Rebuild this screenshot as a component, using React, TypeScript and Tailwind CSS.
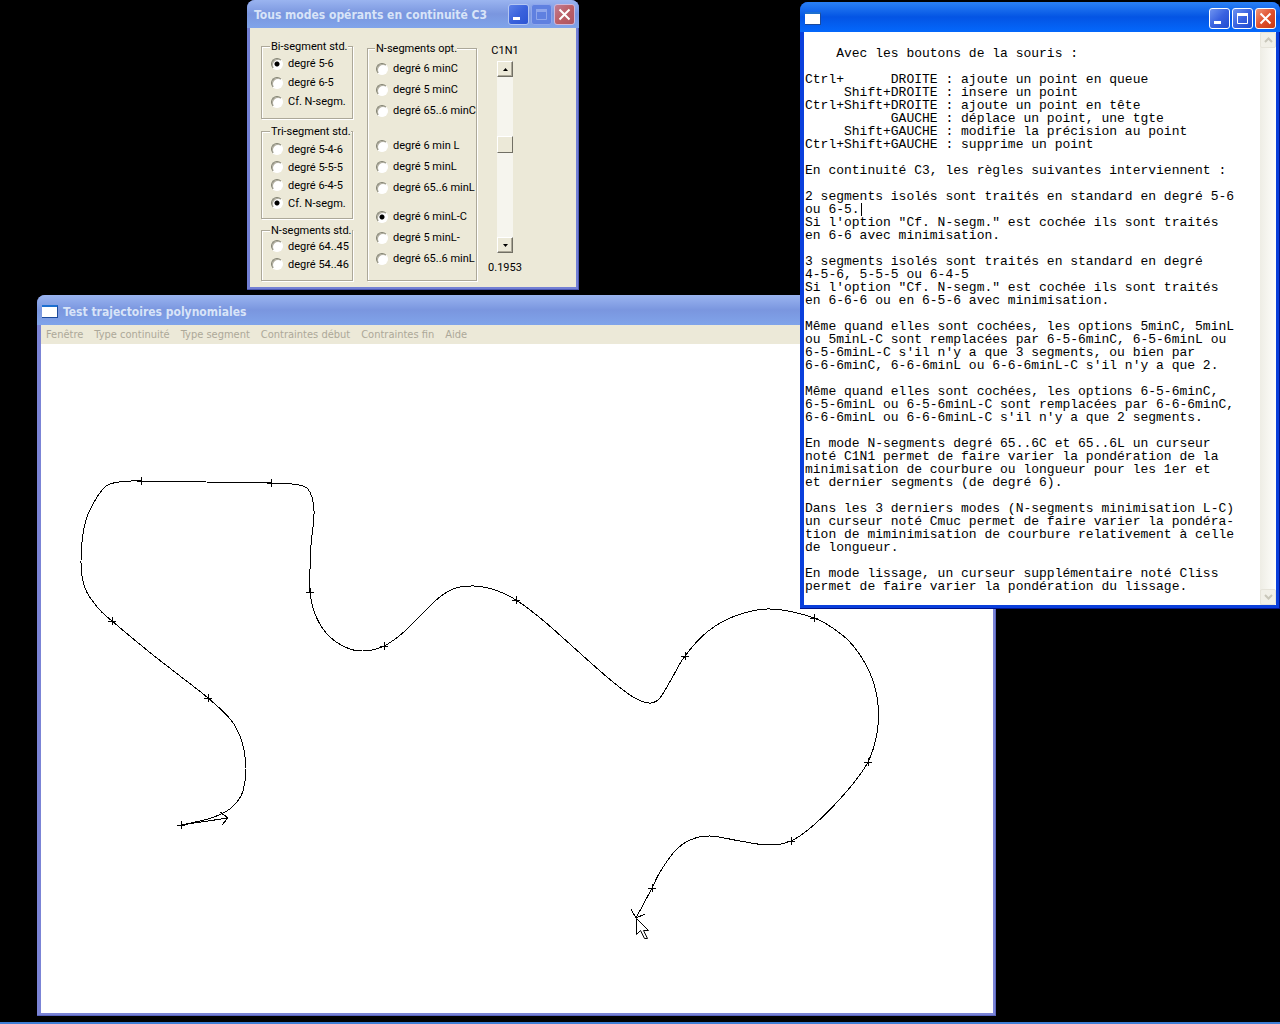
import React, { useState } from "react";

type Point = [number, number];

// points de passage (croix affichées)
const knots: Point[] = [
  [181, 825], [208, 698], [112, 621], [141, 481], [271, 483], [310, 592], [384, 646],
  [516, 600], [685, 656], [814, 618], [868, 762], [791, 841], [652, 888],
];

// trajectoire échantillonnée
const trajectory: Point[] = [
  [181, 825], [208, 819], [227, 811], [237, 802], [243, 791], [246, 768], [242, 742],
  [231, 720], [208, 698], [180, 676], [148, 651], [112, 621], [98, 608], [85, 588],
  [81, 561], [86, 520], [103, 489], [119, 482], [141, 481], [206, 482], [271, 483],
  [292, 484], [308, 489], [314, 511], [311, 545], [310, 570], [310, 592], [315, 614],
  [327, 634], [345, 647], [363, 651], [384, 646], [405, 631], [435, 601], [453, 589],
  [474, 586], [495, 590], [516, 600], [545, 622], [600, 671], [627, 693], [641, 701],
  [651, 703], [660, 698], [672, 678], [685, 656], [707, 632], [735, 616], [770, 609],
  [814, 618], [841, 634], [858, 652], [872, 678], [878, 705], [877, 733], [868, 762],
  [847, 791], [815, 824], [791, 841], [768, 845], [740, 841], [710, 836], [690, 840],
  [675, 851], [660, 872], [652, 888], [636, 918],
];

// Catmull-Rom -> Bézier
const toPath = (pts: Point[]): string => {
  let d = `M${pts[0][0]} ${pts[0][1]}`;
  for (let i = 0; i < pts.length - 1; i++) {
    const p0 = pts[i - 1] ?? pts[i];
    const p1 = pts[i];
    const p2 = pts[i + 1];
    const p3 = pts[i + 2] ?? p2;
    d += `C${p1[0] + (p2[0] - p0[0]) / 6} ${p1[1] + (p2[1] - p0[1]) / 6} `;
    d += `${p2[0] - (p3[0] - p1[0]) / 6} ${p2[1] - (p3[1] - p1[1]) / 6} ${p2[0]} ${p2[1]}`;
  }
  return d;
};

const helpText = `
    Avec les boutons de la souris :

Ctrl+      DROITE : ajoute un point en queue
     Shift+DROITE : insere un point
Ctrl+Shift+DROITE : ajoute un point en tête
           GAUCHE : déplace un point, une tgte
     Shift+GAUCHE : modifie la précision au point
Ctrl+Shift+GAUCHE : supprime un point

En continuité C3, les règles suivantes interviennent :

2 segments isolés sont traités en standard en degré 5-6
ou 6-5.
Si l'option "Cf. N-segm." est cochée ils sont traités
en 6-6 avec minimisation.

3 segments isolés sont traités en standard en degré
4-5-6, 5-5-5 ou 6-4-5
Si l'option "Cf. N-segm." est cochée ils sont traités
en 6-6-6 ou en 6-5-6 avec minimisation.

Même quand elles sont cochées, les options 5minC, 5minL
ou 5minL-C sont remplacées par 6-5-6minC, 6-5-6minL ou
6-5-6minL-C s'il n'y a que 3 segments, ou bien par
6-6-6minC, 6-6-6minL ou 6-6-6minL-C s'il n'y a que 2.

Même quand elles sont cochées, les options 6-5-6minC,
6-5-6minL ou 6-5-6minL-C sont remplacées par 6-6-6minC,
6-6-6minL ou 6-6-6minL-C s'il n'y a que 2 segments.

En mode N-segments degré 65..6C et 65..6L un curseur
noté C1N1 permet de faire varier la pondération de la
minimisation de courbure ou longueur pour les 1er et
et dernier segments (de degré 6).

Dans les 3 derniers modes (N-segments minimisation L-C)
un curseur noté Cmuc permet de faire varier la pondéra-
tion de miminimisation de courbure relativement à celle
de longueur.

En mode lissage, un curseur supplémentaire noté Cliss
permet de faire varier la pondération du lissage.
`;

const menus = ["Fenêtre", "Type continuité", "Type segment", "Contraintes début", "Contraintes fin", "Aide"];

type ButtonKind = "min" | "max" | "close";

const TitleButton = ({ kind, active }: { kind: ButtonKind; active: boolean }) => {
  const disabled = kind === "max" && !active;
  let color = active
    ? "border-white bg-linear-to-br from-[#6f93f0] via-[#3a62e0] to-[#1f4bd0]"
    : "border-[#b3c6f2] bg-linear-to-br from-[#5c80e8] via-[#3a62dc] to-[#2c55d4]";
  if (disabled) color = "border-[#8ea6ec] bg-[#5f80e0]";
  if (kind === "close") {
    color = active
      ? "border-white bg-linear-to-br from-[#ee9478] via-[#e0502c] to-[#c83a14]"
      : "border-[#d0b8d8] bg-linear-to-br from-[#c07c94] via-[#bc5f66] to-[#ac5460]";
  }
  const label = { min: "Réduire", max: "Agrandir", close: "Fermer" }[kind];
  return (
    <button
      type="button"
      aria-label={label}
      disabled={disabled}
      className={`flex h-[21px] w-[21px] items-center justify-center rounded-[3px] border ${color}`}
    >
      <svg width="19" height="19" viewBox="0 0 19 19" fill="none" stroke={disabled ? "#8ea6ec" : "#fff"}>
        {kind === "min" && <path d="M4 13.5h7" strokeWidth="3" />}
        {kind === "max" && (
          <>
            <path d="M4.5 5v9.5h10V5" />
            <path d="M4 5.5h11" strokeWidth="3" />
          </>
        )}
        {kind === "close" && <path d="M4.5 4.5l10 10M14.5 4.5l-10 10" strokeWidth="2" />}
      </svg>
    </button>
  );
};

const WindowIcon = () => (
  <span className="h-[13px] w-4 border-r border-b border-t-2 border-r-[#1c4a9c] border-b-[#1c4a9c] border-t-[#1c6fd0] bg-white" />
);

type RadioProps = {
  name: string;
  label: string;
  checked: boolean;
  onChange: () => void;
};

const Radio = ({ name, label, checked, onChange }: RadioProps) => (
  <label className="flex h-full items-center gap-[5px] whitespace-nowrap">
    <input
      type="radio"
      name={name}
      checked={checked}
      onChange={onChange}
      className="h-3 w-3 shrink-0 appearance-none rounded-full border border-t-[#808070] border-r-white border-b-white border-l-[#808070] bg-white shadow-[inset_1px_1px_0_#b0ad9e] checked:bg-[radial-gradient(circle,#000_2px,#fff_3px)]"
    />
    <span className="pt-[2px]">{label}</span>
  </label>
);

type GroupProps = {
  title: string;
  options: string[];
  initial?: number;
  className: string;
  rowClass: (i: number) => string;
};

const Group = ({ title, options, initial = -1, className, rowClass }: GroupProps) => {
  const [selected, setSelected] = useState<number>(initial);
  return (
    <fieldset
      className={`min-w-0 border border-[#aca899] shadow-[1px_1px_0_#fff,inset_1px_1px_0_#fff] ${className}`}
    >
      <legend className="-ml-px h-[14px] bg-[#ece9d8] pl-px leading-[15px] whitespace-nowrap">{title}</legend>
      {options.map((option, i) => (
        <div key={i} className={rowClass(i)}>
          <Radio name={title} label={option} checked={selected === i} onChange={() => setSelected(i)} />
        </div>
      ))}
    </fieldset>
  );
};

const arrowButton =
  "flex h-4 w-full items-center justify-center border border-t-white border-l-white border-r-[#716f64] border-b-[#716f64] bg-[#ece9d8] shadow-[inset_-1px_-1px_0_#aca899]";

const ModesWindow = () => {
  const [c1n1, setC1n1] = useState<number>(0.1953);
  return (
    <section className="absolute top-0 left-[247px] w-[332px] rounded-t-lg bg-[#7380d4] px-[3px] pb-[3px] shadow-[inset_-1px_-1px_0_#4c58b4]">
      <header className="-mx-[3px] flex h-7 items-center rounded-t-lg bg-linear-to-b from-[#9ab4f0] via-[#7a96df] to-[#80a4ea] pt-px pr-1 pl-[7px]">
        <h1 className="flex-1 font-['DejaVu_Sans_Condensed','DejaVu_Sans',sans-serif] text-[12px] font-bold text-[#d8e4f8]">
          Tous modes opérants en continuité C3
        </h1>
        <div className="flex gap-[2px]">
          <TitleButton kind="min" active={false} />
          <TitleButton kind="max" active={false} />
          <TitleButton kind="close" active={false} />
        </div>
      </header>
      <div className="flex bg-[#ece9d8] pt-[11px] pb-[6px] pl-[11px] font-['Roboto','Liberation_Sans',sans-serif] text-[11px] text-black">
        <div className="flex w-[92px] flex-col">
          <Group
            title="Bi-segment std."
            options={["degré 5-6", "degré 6-5", "Cf. N-segm."]}
            initial={0}
            className="pt-px pb-[7px] pl-[9px]"
            rowClass={() => "h-[19px]"}
          />
          <Group
            title="Tri-segment std."
            options={["degré 5-4-6", "degré 5-5-5", "degré 6-4-5", "Cf. N-segm."]}
            initial={3}
            className="mt-[5px] pt-[2px] pb-[6px] pl-[9px]"
            rowClass={() => "h-[18px]"}
          />
          <Group
            title="N-segments std."
            options={["degré 64..45", "degré 54..46"]}
            className="mt-1 pb-[7px] pl-[9px]"
            rowClass={() => "h-[18px]"}
          />
        </div>
        <div className="ml-[14px] w-[110px] pt-[2px]">
          <Group
            title="N-segments opt."
            options={[
              "degré 6 minC",
              "degré 5 minC",
              "degré 65..6 minC",
              "degré 6 min L",
              "degré 5 minL",
              "degré 65..6 minL",
              "degré 6 minL-C",
              "degré 5 minL-",
              "degré 65..6 minL",
            ]}
            initial={6}
            className="pt-[3px] pb-[11px] pl-2"
            rowClass={(i) => (i === 3 ? "mt-[14px] h-[21px]" : i === 6 ? "mt-2 h-[21px]" : "h-[21px]")}
          />
        </div>
        <div className="ml-2 flex w-10 flex-col items-center pt-[5px]">
          <label htmlFor="c1n1" className="leading-[14px]">
            C1N1
          </label>
          <div className="mt-[3px] flex w-4 flex-col bg-[#f6f5ee]">
            <button
              type="button"
              aria-label="Diminuer"
              className={arrowButton}
              onClick={() => setC1n1(Math.max(0, c1n1 - 0.01))}
            >
              <svg width="5" height="3" viewBox="0 0 5 3">
                <path d="M0 3L2.5 0L5 3z" />
              </svg>
            </button>
            <input
              id="c1n1"
              type="range"
              min={0}
              max={0.47}
              step={0.0001}
              value={c1n1}
              onChange={(e: React.ChangeEvent<HTMLInputElement>) => setC1n1(Number(e.target.value))}
              className="h-40 w-4 appearance-none bg-transparent [writing-mode:vertical-lr] [&::-webkit-slider-thumb]:h-[17px] [&::-webkit-slider-thumb]:w-4 [&::-webkit-slider-thumb]:appearance-none [&::-webkit-slider-thumb]:border [&::-webkit-slider-thumb]:border-t-white [&::-webkit-slider-thumb]:border-r-[#716f64] [&::-webkit-slider-thumb]:border-b-[#716f64] [&::-webkit-slider-thumb]:border-l-white [&::-webkit-slider-thumb]:bg-[#ece9d8]"
            />
            <button
              type="button"
              aria-label="Augmenter"
              className={arrowButton}
              onClick={() => setC1n1(Math.min(0.47, c1n1 + 0.01))}
            >
              <svg width="5" height="3" viewBox="0 0 5 3">
                <path d="M0 0L2.5 3L5 0z" />
              </svg>
            </button>
          </div>
          <output htmlFor="c1n1" className="mt-2 leading-[14px]">
            {c1n1.toFixed(4)}
          </output>
        </div>
      </div>
    </section>
  );
};

const TrajectoryWindow = () => (
  <section className="absolute top-[295px] left-[37px] w-[959px] rounded-t-lg bg-[#7b84d6] pr-[3px] pb-[3px] pl-1 shadow-[inset_-1px_-1px_0_#5a66c0]">
    <header className="-mr-[3px] -ml-1 flex h-[30px] items-center gap-[5px] rounded-t-lg bg-linear-to-b from-[#9ab4f0] via-[#7a96df] to-[#80a4ea] px-[5px] pt-[3px]">
      <WindowIcon />
      <h1 className="font-['DejaVu_Sans_Condensed','DejaVu_Sans',sans-serif] text-[12px] font-bold text-[#d8e4f8]">
        Test trajectoires polynomiales
      </h1>
    </header>
    <nav className="flex h-[19px] items-center gap-[11px] bg-[#ece9d8] pt-px pl-[5px] font-['DejaVu_Sans_Condensed','DejaVu_Sans',sans-serif] text-[11px] text-[#aca899]">
      {menus.map((menu) => (
        <button key={menu} type="button" disabled>
          {menu}
        </button>
      ))}
    </nav>
    <svg
      viewBox="41 344 952 669"
      className="block w-full bg-white"
      fill="none"
      stroke="#000"
      shapeRendering="crispEdges"
    >
      <path d={toPath(trajectory)} />
      {knots.map(([x, y]) => (
        <path key={`${x}-${y}`} d={`M${x - 4} ${y + 0.5}h8M${x + 0.5} ${y - 4}v8`} />
      ))}
      {/* tangentes de début et de fin */}
      <path d="M181 825L228 818M220 812L228 818L222 825" />
      <path d="M631 909L636 918L645 914" />
      <path
        d="M636.5 918.5v16l4-4 4 8h3l-4-8h5z"
        fill="#fff"
        shapeRendering="auto"
      />
    </svg>
  </section>
);

const HelpWindow = () => (
  <section className="absolute top-[2px] left-[800px] w-[480px] rounded-t-lg bg-[#0a3fdc] px-1 pb-1 shadow-[inset_-1px_-1px_0_#00138c]">
    <header className="-mx-1 flex h-[30px] items-center rounded-t-lg bg-linear-to-b from-[#2a80f4] via-[#0454e4] to-[#0468fc] pt-[3px] pr-1 pl-[5px]">
      <WindowIcon />
      <div className="ml-auto flex gap-[2px]">
        <TitleButton kind="min" active />
        <TitleButton kind="max" active />
        <TitleButton kind="close" active />
      </div>
    </header>
    <div className="relative flex bg-white">
      <textarea
        aria-label="Aide"
        rows={44}
        wrap="off"
        defaultValue={helpText}
        className="block h-[573px] min-w-0 flex-1 resize-none overflow-hidden bg-white pt-[2px] pl-px font-['Liberation_Mono','Courier_New',monospace] text-[13px] leading-[13px] text-black outline-none"
      />
      {/* curseur de saisie */}
      <span className="absolute top-[171px] left-[57px] h-[13px] w-px bg-black" />
      <div className="flex w-4 flex-col justify-between bg-linear-to-r from-[#eeede5] to-[#fefefb]">
        <button
          type="button"
          disabled
          aria-label="Défiler vers le haut"
          className="flex h-4 items-center justify-center rounded-[2px] border border-[#e6e4da] bg-[#f1f0e8]"
        >
          <svg width="9" height="6" viewBox="0 0 9 6" fill="none" stroke="#c9c7ba" strokeWidth="2">
            <path d="M1 5l3.500-3.500L8 5" />
          </svg>
        </button>
        <button
          type="button"
          disabled
          aria-label="Défiler vers le bas"
          className="flex h-4 items-center justify-center rounded-[2px] border border-[#e6e4da] bg-[#f1f0e8]"
        >
          <svg width="9" height="6" viewBox="0 0 9 6" fill="none" stroke="#c9c7ba" strokeWidth="2">
            <path d="M1 1l3.500 3.500L8 1" />
          </svg>
        </button>
      </div>
    </div>
  </section>
);

const App = () => {
  return (
    <main className="relative h-screen overflow-hidden bg-black">
      <TrajectoryWindow />
      <ModesWindow />
      <HelpWindow />
      <footer className="absolute inset-x-0 bottom-0 h-[2px] bg-[#3f7fd6]" />
    </main>
  );
};

export default App;
